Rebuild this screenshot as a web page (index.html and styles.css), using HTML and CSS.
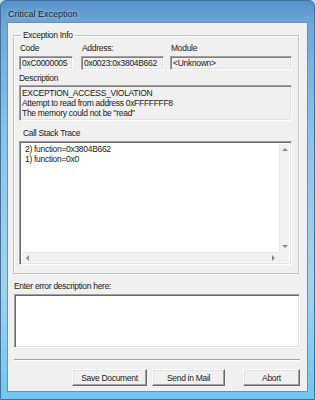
FILE: index.html
```html
<!DOCTYPE html>
<html lang="en">
<head>
    <meta charset="UTF-8">
    <meta name="viewport" content="width=device-width, initial-scale=1.0">
    <title>Critical Exception</title>
    <link rel="stylesheet" href="styles.css">
</head>
<body>

    <div class="window">
        <div class="titlebar">Critical Exception</div>

        <div class="client">
            <!-- Exception info group -->
            <fieldset class="group">
                <legend>Exception Info</legend>

                <div class="row">
                    <div class="field code">
                        <label>Code</label>
                        <div class="edit">0xC0000005</div>
                    </div>
                    <div class="field address">
                        <label>Address:</label>
                        <div class="edit">0x0023:0x3804B662</div>
                    </div>
                    <div class="field module">
                        <label>Module</label>
                        <div class="edit">&lt;Unknown&gt;</div>
                    </div>
                </div>

                <label class="desc-label">Description</label>
                <div class="edit multi">
                    EXCEPTION_ACCESS_VIOLATION<br>
                    Attempt to read from address 0xFFFFFFF8<br>
                    The memory could not be "read"
                </div>

                <label class="stack-label">Call Stack Trace</label>
                <div class="listbox">
                    <div class="list-items">
                        <div>2) function=0x3804B662</div>
                        <div>1) function=0x0</div>
                    </div>
                    <div class="vscroll">
                        <span class="arrow up"></span>
                        <span class="arrow down"></span>
                    </div>
                    <div class="hscroll">
                        <span class="arrow left"></span>
                        <span class="arrow right"></span>
                    </div>
                    <div class="corner"></div>
                </div>
            </fieldset>

            <label class="user-label" for="userDesc">Enter error description here:</label>
            <textarea id="userDesc" class="user-desc"></textarea>

            <div class="separator"></div>

            <div class="buttons">
                <button type="button" class="btn-save">Save Document</button>
                <button type="button" class="btn-mail">Send in Mail</button>
                <button type="button" class="btn-abort">Abort</button>
            </div>
        </div>
    </div>

</body>
</html>
```

FILE: styles.css
```css
body {
    margin: 0;
    background-color: #cfe0ee;
    font-family: "Liberation Sans", Arial, sans-serif;
    font-size: 8.5px;
    letter-spacing: -0.3px;
    color: #1a1a1a;
}

.window {
    width: 315px;
    height: 400px;
    box-sizing: border-box;
    border: 1px solid #44719c;
    border-radius: 6px 6px 0 0;
    padding: 0 6px 7px 6px;
    display: flex;
    flex-direction: column;
    background: linear-gradient(180deg, #5591cb 0%, #6fa8da 6%, #8cc3e9 35%, #a1d3f0 70%, #6fc7ef 100%);
}

.titlebar {
    height: 16px;
    line-height: 16px;
    padding: 5px 0 0 1px;
    font-size: 9px;
    letter-spacing: 0;
    color: #1b1b1b;
    text-shadow: 0 0 4px rgba(255, 255, 255, 0.8);
}

.client {
    flex: 1;
    background-color: #f0f0f0;
    border: 1px solid #6d8fb0;
    display: flex;
    flex-direction: column;
}

/* group box */
.group {
    margin: 7px 0 0 5px;
    width: 286px;
    box-sizing: border-box;
    padding: 0 6px 8px 5px;
    border: 1px solid #c4c4c4;
    box-shadow: 1px 1px 0 #fff, inset 1px 1px 0 #fff;
}

.group legend {
    padding: 0 2px;
    margin-left: 2px;
    line-height: 10px;
}

label {
    display: block;
    line-height: 12px;
}

.row {
    display: flex;
    margin-top: 2px;
}

.field label {
    margin-bottom: 2px;
    padding-left: 1px;
}

.code {
    width: 54px;
}

.address {
    width: 83px;
    margin-left: 8px;
}

.module {
    width: 122px;
    margin-left: 6px;
}

.edit {
    height: 14px;
    box-sizing: border-box;
    padding: 0 2px;
    line-height: 12px;
    background-color: #f0f0f0;
    border: 1px solid;
    border-color: #a0a0a0 #fff #fff #a0a0a0;
    box-shadow: inset 1px 1px 0 #808080, inset -1px -1px 0 #e3e3e3;
    white-space: nowrap;
    overflow: hidden;
}

.desc-label {
    margin-top: 2px;
}

.edit.multi {
    height: 36px;
    margin-top: 1px;
    padding: 2px 2px 0 2px;
    line-height: 10px;
}

.stack-label {
    margin-top: 6px;
    padding-left: 4px;
}

.listbox {
    margin-top: 2px;
    height: 124px;
    box-sizing: border-box;
    background-color: #fff;
    border: 1px solid;
    border-color: #a0a0a0 #fff #fff #a0a0a0;
    box-shadow: inset 1px 1px 0 #696969, inset -1px -1px 0 #e3e3e3;
    padding: 2px;
    display: grid;
    grid-template-columns: 1fr 10px;
    grid-template-rows: 1fr 10px;
}

.list-items {
    padding: 1px 0 0 3px;
    line-height: 9.5px;
}

.vscroll,
.hscroll,
.corner {
    background-color: #f1f1f1;
    display: flex;
    justify-content: space-between;
    align-items: center;
}

.vscroll {
    flex-direction: column;
    padding: 4px 0;
    border-left: 1px solid #e6e6e6;
}

.hscroll {
    padding: 0 4px;
    border-top: 1px solid #e6e6e6;
}

.arrow {
    width: 0;
    height: 0;
    border: 3px solid transparent;
}

.arrow.up {
    border-bottom-color: #8a8a8a;
    border-top-width: 0;
}

.arrow.down {
    border-top-color: #8a8a8a;
    border-bottom-width: 0;
}

.arrow.left {
    border-right-color: #8a8a8a;
    border-left-width: 0;
}

.arrow.right {
    border-left-color: #8a8a8a;
    border-right-width: 0;
}

.user-label {
    margin: 6px 0 0 6px;
}

.user-desc {
    display: block;
    margin: 2px 0 0 6px;
    width: 286px;
    height: 54px;
    box-sizing: border-box;
    resize: none;
    background-color: #fff;
    border: 1px solid;
    border-color: #a0a0a0 #fff #fff #a0a0a0;
    box-shadow: inset 1px 1px 0 #696969, inset -1px -1px 0 #e3e3e3;
    outline: none;
}

.separator {
    margin: 11px 0 0 6px;
    width: 286px;
    height: 0;
    border-top: 1px solid #a0a0a0;
    border-bottom: 1px solid #fff;
}

.buttons {
    display: flex;
    margin: 8px 0 0 64px;
}

.buttons button {
    height: 17px;
    padding: 0;
    font-family: inherit;
    font-size: 8.5px;
    letter-spacing: -0.3px;
    color: #1a1a1a;
    background-color: #f0f0f0;
    border: 1px solid;
    border-color: #fff #696969 #696969 #fff;
    box-shadow: inset -1px -1px 0 #a0a0a0, inset 1px 1px 0 #e3e3e3;
}

.btn-save {
    width: 75px;
}

.btn-mail {
    width: 73px;
    margin-left: 5px;
}

.btn-abort {
    width: 57px;
    margin-left: 18px;
}
```
